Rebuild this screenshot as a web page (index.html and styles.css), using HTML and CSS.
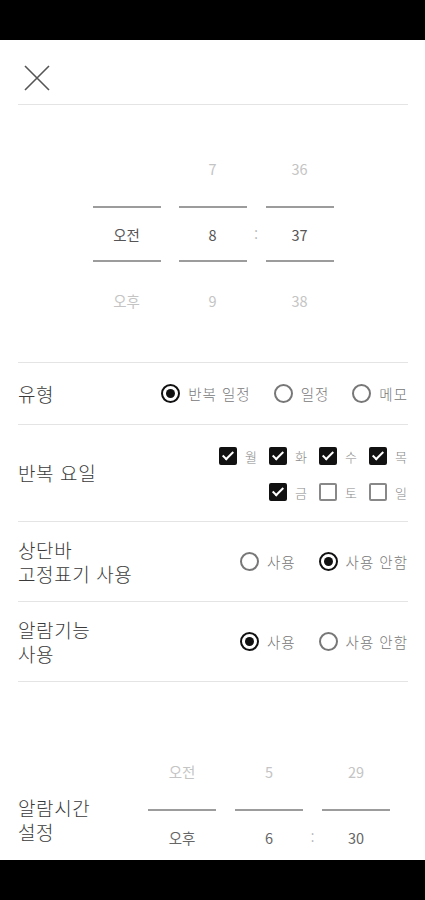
FILE: index.html
```html
<!DOCTYPE html>
<html lang="ko">
<head>
    <meta charset="UTF-8">
    <meta name="viewport" content="width=device-width, initial-scale=1.0">
    <title>일정 추가</title>
    <link rel="stylesheet" href="styles.css">
</head>
<body>
    <div class="screen">
        <div class="status-bar"></div>

        <div class="content">
            <div class="header">
                <svg class="close" width="26" height="26" viewBox="0 0 26 26">
                    <path d="M1 1 L25 25 M25 1 L1 25" stroke="#555" stroke-width="1.6" fill="none"/>
                </svg>
            </div>

            <div class="time-section">
                <div class="picker">
                    <div class="col">
                        <div class="cell dim"></div>
                        <div class="cell sel">오전</div>
                        <div class="cell dim">오후</div>
                    </div>
                    <div class="gap"></div>
                    <div class="col">
                        <div class="cell dim">7</div>
                        <div class="cell sel">8</div>
                        <div class="cell dim">9</div>
                    </div>
                    <div class="colon">
                        <div class="cell dim"></div>
                        <div class="cell mid">:</div>
                    </div>
                    <div class="col">
                        <div class="cell dim">36</div>
                        <div class="cell sel">37</div>
                        <div class="cell dim">38</div>
                    </div>
                </div>
            </div>

            <div class="row type-row">
                <div class="label">유형</div>
                <div class="options">
                    <div class="opt"><span class="radio on"></span>반복 일정</div>
                    <div class="opt"><span class="radio"></span>일정</div>
                    <div class="opt"><span class="radio"></span>메모</div>
                </div>
            </div>

            <div class="row days-row">
                <div class="label">반복 요일</div>
                <div class="days">
                    <div class="day-line">
                        <div class="day"><span class="check on"></span>월</div>
                        <div class="day"><span class="check on"></span>화</div>
                        <div class="day"><span class="check on"></span>수</div>
                        <div class="day"><span class="check on"></span>목</div>
                    </div>
                    <div class="day-line">
                        <div class="day"><span class="check on"></span>금</div>
                        <div class="day"><span class="check"></span>토</div>
                        <div class="day"><span class="check"></span>일</div>
                    </div>
                </div>
            </div>

            <div class="row tall-row">
                <div class="label">상단바<br>고정표기 사용</div>
                <div class="options">
                    <div class="opt"><span class="radio"></span>사용</div>
                    <div class="opt"><span class="radio on"></span>사용 안함</div>
                </div>
            </div>

            <div class="row tall-row">
                <div class="label">알람기능<br>사용</div>
                <div class="options">
                    <div class="opt"><span class="radio on"></span>사용</div>
                    <div class="opt"><span class="radio"></span>사용 안함</div>
                </div>
            </div>

            <div class="alarm-row">
                <div class="label alarm-label">알람시간<br>설정</div>
                <div class="picker alarm-picker">
                    <div class="col">
                        <div class="cell dim">오전</div>
                        <div class="cell sel">오후</div>
                    </div>
                    <div class="gap"></div>
                    <div class="col">
                        <div class="cell dim">5</div>
                        <div class="cell sel">6</div>
                    </div>
                    <div class="colon">
                        <div class="cell dim"></div>
                        <div class="cell mid">:</div>
                    </div>
                    <div class="col">
                        <div class="cell dim">29</div>
                        <div class="cell sel">30</div>
                    </div>
                </div>
            </div>
        </div>

        <div class="nav-bar"></div>
    </div>
</body>
</html>
```

FILE: styles.css
```css
body {
    margin: 0;
    font-family: "Noto Sans CJK KR", "Noto Sans", sans-serif;
    background: #fff;
}
.screen {
    width: 425px;
    height: 900px;
    display: flex;
    flex-direction: column;
}
.status-bar, .nav-bar {
    height: 40px;
    background: #000;
    flex-shrink: 0;
}
.content {
    flex: 1;
    overflow: hidden;
    padding: 0 17px 0 18px;
}
.header {
    height: 63px;
    display: flex;
    align-items: center;
    padding-left: 6px;
    padding-top: 1px;
    border-bottom: 1px solid #e4e4e4;
}
.close {
    display: block;
    margin-top: 10px;
}

/* time picker */
.time-section {
    padding: 25px 0 24px;
    display: flex;
    justify-content: center;
    border-bottom: 1px solid #e4e4e4;
}
.picker {
    display: flex;
}
.col {
    width: 68px;
    display: flex;
    flex-direction: column;
}
.gap {
    width: 18px;
}
.colon {
    width: 19px;
    display: flex;
    flex-direction: column;
}
.cell {
    height: 76px;
    display: flex;
    align-items: center;
    justify-content: center;
    font-size: 14.5px;
    flex-shrink: 0;
}
.cell.dim {
    color: #c4c4c4;
}
.cell.sel {
    height: 52px;
    color: #555;
    border-top: 2px solid #9c9c9c;
    border-bottom: 2px solid #9c9c9c;
}
.cell.mid {
    height: 56px;
    font-size: 13px;
    color: #aaa;
}
.alarm-picker .cell.sel {
    color: #666;
}

/* rows */
.row {
    display: flex;
    align-items: center;
    justify-content: space-between;
    border-bottom: 1px solid #e4e4e4;
}
.label {
    font-size: 19px;
    line-height: 24px;
    letter-spacing: 0.6px;
    color: #3a3a3a;
    font-weight: 300;
}
.type-row {
    height: 61px;
}
.days-row {
    height: 96px;
}
.tall-row {
    height: 79px;
}
.options {
    display: flex;
    gap: 23px;
}
.opt {
    display: flex;
    align-items: center;
    font-size: 14.5px;
    letter-spacing: 1px;
    color: #777;
    font-weight: 300;
}
.radio {
    width: 15px;
    height: 15px;
    border: 2px solid #777;
    border-radius: 50%;
    margin-right: 8px;
    box-sizing: content-box;
    position: relative;
}
.radio.on {
    border-color: #111;
}
.radio.on::after {
    content: "";
    position: absolute;
    left: 3px;
    top: 3px;
    width: 9px;
    height: 9px;
    border-radius: 50%;
    background: #111;
}

/* days */
.days {
    display: flex;
    flex-direction: column;
    align-items: flex-end;
    gap: 17px;
    padding-top: 2px;
}
.day-line {
    display: flex;
    gap: 11px;
}
.day {
    display: flex;
    align-items: center;
    font-size: 13px;
    color: #888;
    width: 39px;
    font-weight: 300;
}
.check {
    width: 14px;
    height: 14px;
    border: 2px solid #888;
    border-radius: 2px;
    margin-right: 8px;
    position: relative;
}
.check.on {
    background: #111;
    border-color: #111;
}
.check.on::after {
    content: "";
    position: absolute;
    left: 4px;
    top: 0px;
    width: 4px;
    height: 9px;
    border-right: 2px solid #fff;
    border-bottom: 2px solid #fff;
    transform: rotate(45deg);
}

/* alarm time */
.alarm-row {
    display: flex;
    align-items: flex-start;
    justify-content: space-between;
    padding-top: 51px;
    padding-right: 18px;
}
.alarm-label {
    margin-top: 63px;
}
.alarm-picker .gap {
    width: 19px;
}
```
